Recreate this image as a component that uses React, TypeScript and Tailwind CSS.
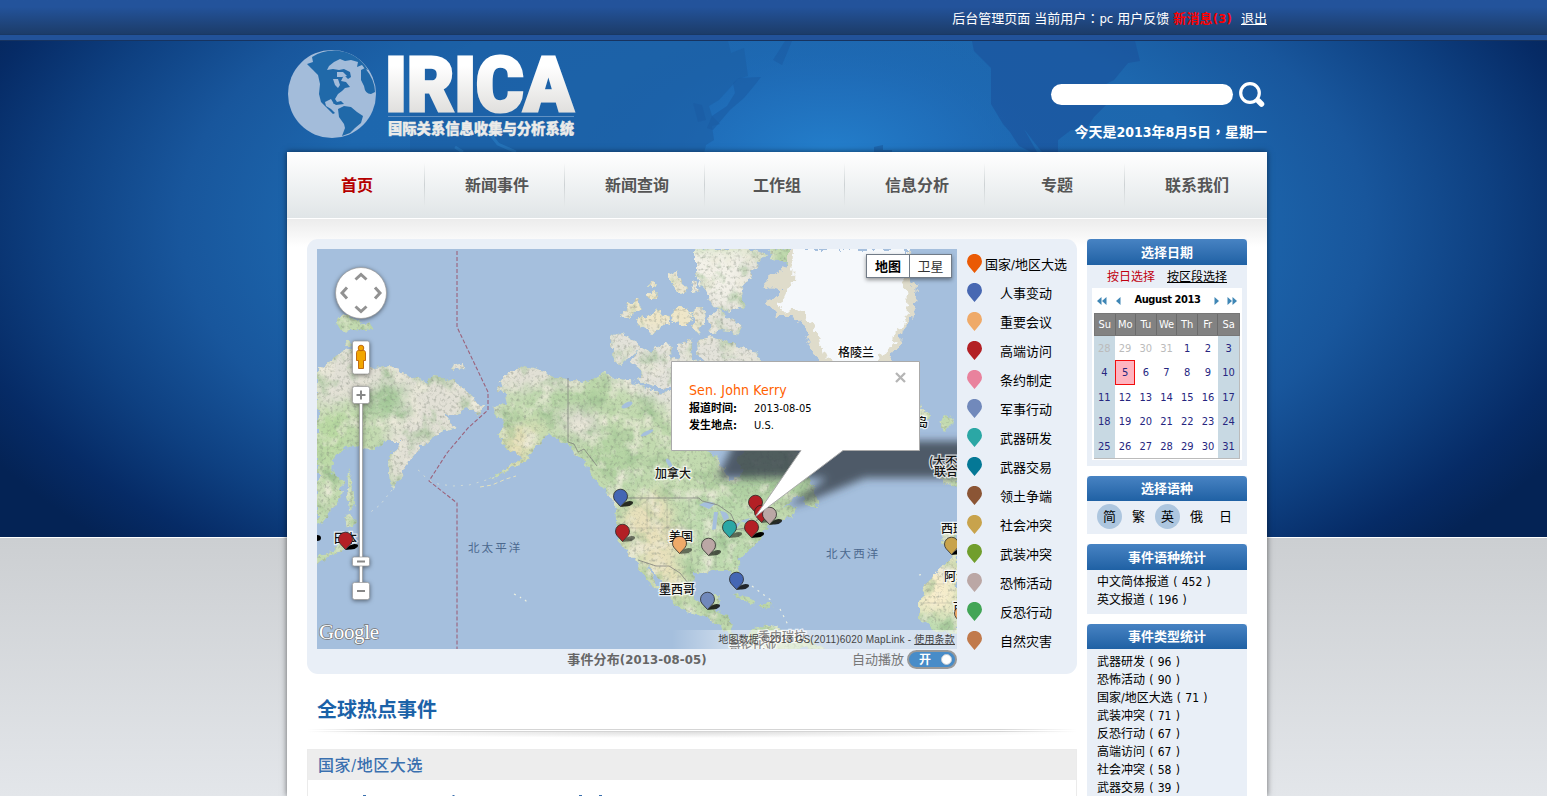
import type { ReactNode } from 'react';

const NAV = ['首页', '新闻事件', '新闻查询', '工作组', '信息分析', '专题', '联系我们'];

const LEGEND: [string, string][] = [
  ['国家/地区大选', '#ea5a05'],
  ['人事变动', '#4868b2'],
  ['重要会议', '#efaa69'],
  ['高端访问', '#b32025'],
  ['条约制定', '#e9829d'],
  ['军事行动', '#7189bb'],
  ['武器研发', '#2ba7a5'],
  ['武器交易', '#047896'],
  ['领土争端', '#8b5535'],
  ['社会冲突', '#c8a34c'],
  ['武装冲突', '#719e2d'],
  ['恐怖活动', '#bba7a5'],
  ['反恐行动', '#42a556'],
  ['自然灾害', '#c17a4c'],
];

const MARKERS: [number, number, string, number][] = [
  [28, 300, '#b32025', 1],
  [303, 257, '#4466b4', 0.8],
  [305, 292, '#b32025', 0.5],
  [362, 304, '#efaa69', 0.5],
  [391, 306, '#bba7a5', 0.6],
  [412, 288, '#2ba7a5', 0.5],
  [438, 263, '#b32025', 0.5],
  [444, 273, '#b32025', 0.5],
  [452, 275, '#bba7a5', 0.8],
  [434, 288, '#b32025', 1],
  [419, 340, '#4466b4', 0.8],
  [390, 360, '#7189bb', 0.8],
  [634, 305, '#c8a34c', 1],
  [644, 374, '#efaa69', 0.5],
];

const TYPES: [string, number][] = [
  ['武器研发', 96],
  ['恐怖活动', 90],
  ['国家/地区大选', 71],
  ['武装冲突', 71],
  ['反恐行动', 67],
  ['高端访问', 67],
  ['社会冲突', 58],
  ['武器交易', 39],
];

const LANGS: [string, boolean][] = [
  ['简', true],
  ['繁', false],
  ['英', true],
  ['俄', false],
  ['日', false],
];

const WEEKS = [
  [28, 29, 30, 31, 1, 2, 3],
  [4, 5, 6, 7, 8, 9, 10],
  [11, 12, 13, 14, 15, 16, 17],
  [18, 19, 20, 21, 22, 23, 24],
  [25, 26, 27, 28, 29, 30, 31],
];

const LAND =
  'M0 118L8 120 15 111 25 103 35 101 46 113 58 119 78 118 83 124 95 129 111 134 115 128 131 130 145 139 155 149 168 156 161 166 151 158 143 164 128 166 138 179 121 184 108 193 98 204 90 213 85 226 75 240 71 223 72 206 84 192 65 192 58 200 43 199 28 198 16 211 15 223 26 232 22 250 8 271 0 274Z' +
  'M31 221L36 231 38 258 33 261 30 240Z M26 269L34 264 41 271 35 278 28 277Z M32 281L34 294 28 301 14 305 0 317 0 309 18 300 26 292Z' +
  'M20 68L28 66 36 70 48 75 57 80 50 82 38 80 26 82 18 76Z M136 117L146 114 147 119 137 120Z M27 92L34 92 33 97 28 97Z' +
  'M179 139L188 126 206 117 221 121 236 128 251 129 265 133 276 130 288 124 298 130 310 131 324 137 336 142 356 143 354 128 350 112 368 106 386 116 400 112 430 120 440 150 412 160 386 180 388 200 402 208 408 224 416 232 425 226 421 210 440 190 470 190 490 222 498 240 480 248 464 260 478 256 476 266 460 274 449 279 446 288 436 298 423 311 421 321 425 333 421 335 414 321 398 321 388 324 376 324 375 341 382 354 394 354 397 346 404 346 399 364 412 366 415 370 413 381 420 389 428 390 435 381 451 376 475 383 488 388 508 400 420 400 418 394 405 378 388 368 368 363 355 353 348 338 330 314 340 338 338 340 321 318 316 308 306 298 300 288 298 254 288 241 275 228 265 211 251 198 248 194 231 186 218 199 208 212 188 224 172 230 188 220 204 208 188 199 181 186 188 176 181 168 175 159 190 154 188 146Z' +
  'M486 244L498 240 502 258 488 256Z M413 345L432 348 440 354 434 356 420 349Z M444 355L456 355 454 359 444 358Z' +
  'M303 67L310 57 321 50 324 60 312 68Z M318 71L326 66 330 70 340 58 344 68 350 66 352 75 344 78 336 85 326 80Z M331 36L337 31 341 36 334 39Z M330 46L337 40 340 50 333 50Z M296 88L304 84 314 89 324 100 314 106 309 112 303 117 294 108Z' +
  'M315 112L323 98 332 103 340 99 350 94 353 98 354 138 336 138 320 132 326 122Z' +
  'M351 24L358 22 364 32 370 38 366 44 356 38Z M373 34L379 31 382 42 376 44Z M355 62L364 58 375 66 372 76 362 76 354 70Z M377 58L386 58 388 72 382 84 376 76Z M392 66L402 60 412 70 424 76 420 84 406 82 394 84Z' +
  'M378 0L434 0 450 6 436 22 424 44 428 58 414 62 398 58 388 44 378 24Z M380 92L392 88 410 92 430 100 446 112 440 130 418 124 396 118 382 108Z M362 96L374 90 376 112 362 112Z' +
  'M452 0L474 0 482 6 474 16 456 10Z M590 168L602 154 612 166 604 178Z M622 172L632 166 636 174 628 182Z' +
  'M622 222L640 210 640 236 628 234Z M626 276L640 272 640 300 630 300 624 290Z M640 306L625 318 608 334 603 354 603 368 618 382 640 386Z';

const ICE =
  'M470 0L598 0 591 14 591 29 600 38 598 56 594 69 585 80 583 95 571 112 556 138 530 146 512 130 505 112 495 103 486 74 475 66 461 66 450 53 465 41 445 36 470 16Z';

function Pin({ color }: { color: string }) {
  return (
    <svg className="h-[19px] w-[15px] shrink-0" viewBox="0 0 15 19">
      <path d="M7.5 19L2.2 12.7A7.5 7.5 0 1 1 12.8 12.7Z" fill={color} />
    </svg>
  );
}

function MapLabel({ x, y, size = 12, children }: { x: number; y: number; size?: number; children: ReactNode }) {
  return (
    <text x={x} y={y + 1} fontSize={size} fill="#111" stroke="#fff" strokeOpacity=".75" strokeWidth="2.5" paintOrder="stroke" fontWeight="500">
      {children}
    </text>
  );
}

function WorldMap() {
  return (
    <svg className="absolute inset-0 h-[400px] w-[640px]" viewBox="0 0 640 400">
      <defs>
        <filter id="terrain" x="-10" y="-10" width="670" height="430" filterUnits="userSpaceOnUse" colorInterpolationFilters="sRGB">
          <feTurbulence type="fractalNoise" baseFrequency=".12" numOctaves="4" seed="8" result="n" />
          <feDisplacementMap in="SourceGraphic" in2="n" scale="10" xChannelSelector="R" yChannelSelector="G" result="d" />
          <feTurbulence type="fractalNoise" baseFrequency=".055" numOctaves="5" seed="3" />
          <feColorMatrix values="0 0 0 0 .93  0 0 0 0 .92  0 0 0 0 .86  2.6 0 0 0 -1.3" />
          <feComposite in2="d" operator="in" result="light" />
          <feTurbulence type="fractalNoise" baseFrequency=".05" numOctaves="5" seed="12" />
          <feColorMatrix values="0 0 0 0 .58  0 0 0 0 .73  0 0 0 0 .54  0 2 0 0 -1.02" />
          <feComposite in2="d" operator="in" result="dark" />
          <feTurbulence type="fractalNoise" baseFrequency=".3" numOctaves="3" seed="21" />
          <feColorMatrix values="0 0 0 0 .5  0 0 0 0 .53  0 0 0 0 .48  0 0 1.3 0 -.66" />
          <feComposite in2="d" operator="in" result="grain" />
          <feMerge>
            <feMergeNode in="d" />
            <feMergeNode in="dark" />
            <feMergeNode in="light" />
            <feMergeNode in="grain" />
          </feMerge>
        </filter>
        <filter id="ice" x="430" y="-10" width="190" height="180" filterUnits="userSpaceOnUse" colorInterpolationFilters="sRGB">
          <feTurbulence type="fractalNoise" baseFrequency=".12" numOctaves="4" seed="5" />
          <feDisplacementMap in="SourceGraphic" scale="13" xChannelSelector="R" yChannelSelector="G" />
        </filter>
        <filter id="soft"><feGaussianBlur stdDeviation="7" /></filter>
        <filter id="shade" x="-20%" y="-40%" width="140%" height="180%"><feGaussianBlur stdDeviation="4" /></filter>
        <clipPath id="land"><path d={LAND} /></clipPath>
        <linearGradient id="fade">
          <stop offset="0" stopColor="#fff" stopOpacity="0" />
          <stop offset=".2" stopColor="#fff" stopOpacity=".5" />
          <stop offset="1" stopColor="#fff" stopOpacity=".55" />
        </linearGradient>
      </defs>
      <rect width="640" height="400" fill="#a5bfdd" />
      <g filter="url(#terrain)">
        <g clipPath="url(#land)">
          <rect width="640" height="400" fill="#c2daaf" />
          <g filter="url(#soft)">
            <path d="M0 95H180V165L130 190 90 240H70V170L45 150 0 160Z" fill="#e2e0d6" />
            <path d="M170 110H270L262 140 226 150 180 140Z" fill="#e2e0d6" />
            <path d="M285 0H450V135L400 190 350 160 290 130Z" fill="#e3e2da" />
            <path d="M360 0H430L420 60 380 40Z" fill="#f3f1e8" />
            <path d="M300 50L360 20 390 90 320 80Z" fill="#eee6c8" />
            <path d="M0 160L40 165 20 210 0 230Z" fill="#b9d9a2" />
            <path d="M60 135L92 140 82 170 52 168Z" fill="#a5ca9a" />
            <path d="M200 140L290 135 280 165 330 230 300 235 260 190Z" fill="#b3d3a2" />
            <path d="M235 165L270 158 285 180 262 192Z" fill="#dedbd2" />
            <path d="M188 180L225 175 205 218 180 222Z" fill="#e6dfb7" />
            <path d="M305 260L345 240 365 300 350 325 310 302Z" fill="#e8e0bb" />
            <path d="M330 315L365 320 370 345 345 350Z" fill="#eae2ba" />
            <path d="M370 250L440 240 440 320 380 320Z" fill="#bddaae" />
            <path d="M395 170L490 190 495 250 415 250Z" fill="#aecfa0" />
            <path d="M595 305H640V365H600Z" fill="#f7edcb" />
            <path d="M600 365H640V390H600Z" fill="#bddbb0" />
          </g>
        </g>
      </g>
      <g filter="url(#ice)">
        <path d={ICE} fill="#dfdccb" />
        <path d="M476 0L594 0 587 30 590 64 572 98 546 130 515 120 498 80 486 62 463 60 475 34Z" fill="#f5f8fb" />
      </g>
      <g fill="#a5bfdd">
        <ellipse cx="310" cy="156" rx="6" ry="2.500" transform="rotate(-25 310 156)" />
        <ellipse cx="330" cy="184" rx="7" ry="1.800" transform="rotate(-25 330 184)" />
        <ellipse cx="352" cy="214" rx="2" ry="5" transform="rotate(-30 352 214)" />
        <path d="M382 256q9-6 16-1l-6 5q-6-3-10-4zM397 263l4 0-2 17-4 1zM403 262q8 0 9 7l-5 3zM411 278l13-5-4 6zM423 272l10-3-4 5z" />
      </g>
      <g fill="none" stroke="#777" strokeOpacity=".7" strokeWidth="1">
        <path d="M298 249H382l3 3 16 4 13 9 5 11-2 5 17-3 6-7 9-3" />
        <path d="M251 129V193l6 2 4 8 6-3 13 17M321 311l18 6h13l11 7 8 10" />
        <path d="M299 279h75M330 250v30M350 250v42M372 250v20M374 270v40M399 280v38M609 335h18v-16M603 354h37" strokeOpacity=".25" />
      </g>
      <path d="M140 2V78L171 143V161L151 179 130 204 112 232 140 254V400" fill="none" stroke="#98435a" strokeOpacity=".75" strokeWidth="1.1" strokeDasharray="4 2" />
      <path d="M101 221l3 2 4 5 7 5 6 2 15 2 16-1 14-4 13-4" fill="none" stroke="#e1e4d1" strokeOpacity=".7" strokeDasharray="2 6" />
      <path d="M163 238l12-2 14-6 10-3" fill="none" stroke="#e3e1bf" strokeDasharray="4 3" />
      <path d="M75 241l-12 15-12 9" fill="none" stroke="#dfe5da" strokeOpacity=".7" strokeDasharray="2 5" />
      <path d="M197 345l2 1M203 348l1 1M208 351l3 3M435 337l20 15M463 360l8 16M602 326l5-1" fill="none" stroke="#edf0e0" strokeWidth="1.2" strokeDasharray="2 5" />
      <g filter="url(#shade)" fill="#3a444f" fillOpacity=".82">
        <path d="M418 192H650V229H548L492 252 470 258 510 229H400Z" />
      </g>
      <g fontFamily="'Noto Sans CJK SC', sans-serif">
        <MapLabel x={521} y={107}>格陵兰</MapLabel>
        <MapLabel x={338} y={228}>加拿大</MapLabel>
        <MapLabel x={352} y={291}>美国</MapLabel>
        <MapLabel x={342} y={344}>墨西哥</MapLabel>
        <MapLabel x={16} y={293}>日本</MapLabel>
        <MapLabel x={599} y={177}>岛</MapLabel>
        <MapLabel x={612} y={216}>(大不</MapLabel>
        <MapLabel x={617} y={226}>联合</MapLabel>
        <MapLabel x={624} y={283}>西班</MapLabel>
        <MapLabel x={627} y={331}>阿尔</MapLabel>
        <MapLabel x={636} y={362}>可</MapLabel>
        <MapLabel x={441} y={391}>委内瑞拉</MapLabel>
        <MapLabel x={412} y={401}>哥伦比亚</MapLabel>
        <g fontSize="11.5" fill="#4b688e" letterSpacing="2.100">
          <text x="151" y="303">北太平洋</text>
          <text x="509" y="309">北大西洋</text>
        </g>
      </g>
      {MARKERS.map(([x, y, color, shadow], i) => (
        <g key={i} transform={`translate(${x + 0.5} ${y + 1})`}>
          <path d="M0 0Q4-6 9-6 14-6 12-3 9 0 4-.5Z" fill="#000" fillOpacity={shadow} />
          <path d="M0-.5L-5.3-6.2A7 7 0 1 1 5.3-6.2Z" fill={color} stroke="#222" strokeOpacity=".75" strokeWidth="1" />
        </g>
      ))}
      <ellipse cx="0" cy="289" rx="4" ry="3" />
      <path d="M354.5 112.5H602.5V201.5H526L438 268 484 201.5H354.5Z" fill="#fff" stroke="#aaa" />
      <rect x="355" width="323" y="381" height="19" fill="url(#fade)" />
      <text x="2" y="390" fontFamily="'Liberation Serif', serif" fontSize="21" textLength="60" fill="#fff" stroke="#777" strokeWidth="1.4" paintOrder="stroke">
        Google
      </text>
    </svg>
  );
}

function MapControls() {
  return (
    <svg className="absolute left-[12px] top-[12px] h-[350px] w-[64px] drop-shadow-[0_1px_2px_rgba(0,0,0,0.5)]" viewBox="12 12 64 350">
      <circle cx="44" cy="44" r="25.5" fill="#fff" stroke="#999" strokeWidth=".7" />
      <g fill="none" stroke="#929292" strokeWidth="3">
        <path d="M38.500 30.500l5.500-5 5.500 5M38.500 57.500l5.500 5 5.500-5M30 38.500l-5 5.500 5 5.500M58 38.500l5 5.500-5 5.500" />
      </g>
      <g fill="#fff" stroke="#999" strokeWidth=".7">
        <rect x="42.500" y="150" width="3" height="185" />
        <rect x="35.500" y="92" width="17" height="33" rx="2" />
        <rect x="35.500" y="137.500" width="17" height="17" rx="2" />
        <rect x="35.500" y="308" width="17" height="9" rx="1.500" />
        <rect x="35.500" y="333.500" width="17" height="17" rx="2" />
      </g>
      <g fill="#f2a600" stroke="#b95f08" strokeWidth=".9">
        <path d="M39.500 103.500q0-2.500 4.500-2.500t4.500 2.500v8h-2v8h-5v-8h-2z" />
        <circle cx="44" cy="99" r="2.800" />
      </g>
      <path d="M39.500 146h9M44 141.500v9M40 312.500h8M40 342h8" stroke="#888" strokeWidth="2" />
    </svg>
  );
}

function Logo() {
  return (
    <svg className="h-[92px] w-[290px]" viewBox="0 0 290 92">
      <defs>
        <linearGradient id="silver" gradientUnits="userSpaceOnUse" x1="0" x2="0" y1="6" y2="65">
          <stop offset=".2" stopColor="#fff" />
          <stop offset="1" stopColor="#e0dfdd" />
        </linearGradient>
      </defs>
      <circle cx="45" cy="46" r="44" fill="#a3bcda" />
      <g fill="#2069a9">
        <path d="M25 9Q35 2 49 2.500 70 4 81 22L78 21 75 17 70 19 71 14 64 12 58 13 53 11 47 14 42 18 40 22 46 21 52 22 57 21 63 24 64 29 61 31 57 27 54 33 59 34 63 39 58 40 55 43 51 46 48 51 50 54 47 56 44 51 38 54 39 58 44 61 48 65 46 66 39 59 34 54 32 46 33 36 31 27 26 22 20 16 26 14Z" />
        <path d="M74 22L78 20Q88 32 88 44L84 46Q78 46 77 38L74 32Z" />
        <path d="M51 61L57 58 64 59 70 64 76 68 74 75 68 80 63 85 55 88 58 80 57 76 52 69Z" />
        <path d="M46 55l8-2 3 3-8 1z" />
      </g>
      <path d="M50 24l6 0 4 4-5 1-5 0zM46 31l5 0 2 6-2 3-3-3z" fill="#a3bcda" />
      <text x="98" y="62.500" fontFamily="Roboto, sans-serif" fontWeight="900" fontSize="76" textLength="188" lengthAdjust="spacingAndGlyphs" fill="url(#silver)" stroke="url(#silver)" strokeWidth="3.200">
        IRICA
      </text>
      <path d="M101 68.500H287" stroke="#7fa5cf" strokeOpacity=".7" />
      <text x="101" y="86" fontFamily="'Noto Sans CJK SC', sans-serif" fontWeight="900" fontSize="14.300" textLength="186" fill="#ebebe9" stroke="#ebebe9" strokeWidth=".4">
        国际关系信息收集与分析系统
      </text>
    </svg>
  );
}

function SideTitle({ short, children }: { short?: boolean; children: ReactNode }) {
  return (
    <h3
      className={`rounded-t-[4px] bg-linear-to-b from-[#4783c3] to-[#1f61a4] text-center text-[13px] font-bold text-white ${short ? 'h-[25px] leading-[25px]' : 'h-[26px] leading-[27px]'}`}
    >
      {children}
    </h3>
  );
}

function Arrow({ d, w }: { d: string; w: number }) {
  return (
    <svg width={w} height="8" viewBox={`0 0 ${w} 8`}>
      <path d={d} fill="#3f86b5" />
    </svg>
  );
}

function Calendar() {
  return (
    <div className="mx-[5px] h-[172px] bg-white px-[2px]">
      <div className="flex h-[25px] items-center px-[3px] text-[11px] font-bold text-black">
        <Arrow w={10} d="M4.500 0v8L0 4zM9.500 0v8L5 4z" />
        <span className="w-[9px]" />
        <Arrow w={5} d="M4.500 0v8L0 4z" />
        <span className="flex-1 text-center tracking-[-0.4px]">August 2013</span>
        <Arrow w={5} d="M.5 0v8L5 4z" />
        <span className="w-[8px]" />
        <Arrow w={10} d="M.5 0v8L5 4zM5.500 0v8L10 4z" />
      </div>
      <div className="h-[146px] border border-t-0 border-[#bbb]">
        <div className="-mx-px grid h-[23px] grid-cols-7 border border-[#777] bg-[#828282] text-center text-[11px] leading-[21px] text-white">
          {['Su', 'Mo', 'Tu', 'We', 'Th', 'Fr', 'Sa'].map((d, i) => (
            <span key={d} className={i < 6 ? 'border-r border-[#6c6c6c]' : ''}>{d}</span>
          ))}
        </div>
        <div className="-ml-px grid h-[122px] grid-cols-7 grid-rows-5 text-center text-[11px] leading-[26px] text-[#26267f]">
          {WEEKS.flatMap((week, r) =>
            week.map((day, c) => {
              const weekend = c === 0 || c === 6;
              const outside = r === 0 && day > 20;
              const chosen = r === 1 && c === 1;
              return (
                <span
                  key={`${r}-${c}`}
                  className={
                    chosen
                      ? 'border border-[#f20d0d] bg-[#ffb4c0] leading-[24px]'
                      : outside
                        ? weekend ? 'bg-[#c8d9e3] text-[#bbb]' : 'text-[#bbb]'
                        : weekend ? 'bg-[#c8d9e3]' : ''
                  }
                >
                  {day}
                </span>
              );
            }),
          )}
        </div>
      </div>
    </div>
  );
}

function HeaderBackdrop() {
  return (
    <svg className="absolute left-0 top-0 h-[538px] w-[1547px]" viewBox="0 0 1547 538">
      <defs>
        <radialGradient id="sea" cx="830" cy="158" r="190" gradientUnits="userSpaceOnUse" gradientTransform="translate(830 158) scale(1.3 .75) translate(-830 -158)">
          <stop offset="0" stopColor="#2480cd" />
          <stop offset=".5" stopColor="#2070bd" stopOpacity=".8" />
          <stop offset="1" stopColor="#1c63b0" stopOpacity="0" />
        </radialGradient>
      </defs>
      <rect x="560" y="41" width="520" height="112" fill="url(#sea)" />
      <path d="M728 41l3 12 13-5 4 28-10 3-19 21-10 6 3 10 8 8-8 2 2 14-8 5-2 8H410V41z" fill="#1b5ca3" fillOpacity=".55" />
      <path d="M733 83l6-5 22-1-7 9-10 12-14 12-17 20-6-2 5-12 15-10 8-13zM693 103l9 2 4 15-8 2zM773 60l12-19h7l-10 24z" fill="#1b5ca3" fillOpacity=".6" />
      <path d="M972 41l2 10 17 17v36l12 20 7 8 9 14 12 6h6l-13-23 10 13 8 10h16v-12l13-10 14 1 9-14 18-18 4-10-14-3 12-6 14-17 12-2-6-24z" fill="#1a529b" fillOpacity=".6" />
      <path d="M455 147l8 5M490 134l8 10 18 8" stroke="#2f87cd" strokeOpacity=".45" strokeWidth="3" fill="none" />
      <path d="M874 147l9-2v5l9 0v2h-18z" fill="#1b5ca3" fillOpacity=".7" />
    </svg>
  );
}

export default function App() {
  return (
    <div className="relative isolate h-[796px] w-full overflow-hidden bg-[#dfe2e5] font-['DejaVu_Sans_Condensed','Noto_Sans_CJK_SC',sans-serif] text-[13px] text-black">
      <div className="absolute inset-x-0 top-0 -z-10 h-[796px] bg-linear-to-b from-[#cccfd2] from-[540px] to-[#e3e6ea]">
        <div className="relative h-[538px] border-b border-white bg-[radial-gradient(ellipse_900px_470px_at_50%_225px,#1f6bb3_0%,#1d67ae_50%,#18569c_66%,#0e4081_80%,#062b66_92%,#042355_100%)]">
          <HeaderBackdrop />
        </div>
      </div>

      <div className="h-[41px] border-b border-[#17335f] bg-[#225299]">
        <div className="h-[35px] border-b border-[#193864] bg-linear-to-b from-[#23539b] from-20% to-[#1c3c69]">
          <div className="ml-[287px] flex h-[36px] w-[980px] items-center justify-end gap-[4px] pt-px whitespace-nowrap text-white">
            <span>后台管理页面</span>
            <span>当前用户<span className="font-['Noto_Sans_CJK_TC']">：</span>pc</span>
            <span>用户反馈</span>
            <span className="font-bold tracking-[0.15px] text-[#f00]">新消息(3)</span>
            <span className="ml-[5px] underline">退出</span>
          </div>
        </div>
      </div>

      <header className="ml-[287px] flex h-[111px] w-[980px] justify-between pt-[7px]">
        <Logo />
        <div className="flex flex-col items-end pt-[34px]">
          <div className="flex h-[26px] items-start gap-[6px] pr-[2px]">
            <div className="mt-[2px] h-[21px] w-[182px] rounded-full bg-white" />
            <svg className="h-[26px] w-[26px]" viewBox="0 0 26 26" fill="none" stroke="#fff" strokeLinecap="round">
              <circle cx="11" cy="11" r="9.300" strokeWidth="3.200" />
              <path d="M19.500 19l3 3" strokeWidth="5.500" />
            </svg>
          </div>
          <p className="mt-[13px] text-[14px] leading-[20px] font-bold whitespace-nowrap text-white">
            今天是2013年8月5日<span className="font-['Noto_Sans_CJK_TC']">，</span>星期一
          </p>
        </div>
      </header>

      <div className="ml-[287px] h-[644px] w-[980px] bg-white shadow-[0_0_6px_rgba(0,0,0,0.55)]">
        <nav className="flex h-[67px] border-b border-white bg-linear-to-b from-white to-[#e0e5e7]">
          {NAV.map((item, i) => (
            <div key={item} className="flex h-[66px] w-[140px] items-center">
              <span className={`flex-1 pt-[2px] pl-[3px] text-center text-[16px] font-bold ${i === 0 ? 'text-[#b50000]' : 'text-[#555]'}`}>{item}</span>
              <span className={`mr-[2px] h-[44px] w-px bg-linear-to-b from-transparent via-[#cdd2d4] to-transparent ${i === 6 ? 'opacity-0' : ''}`} />
            </div>
          ))}
        </nav>

        <div className="flex h-[577px] gap-[10px] overflow-hidden bg-linear-to-b from-[#ececec] to-white to-[28px] px-[20px] pt-[20px]">
          <main className="w-[770px] shrink-0">
            <section className="flex h-[435px] rounded-[11px] bg-[#e9eff7] px-[10px]">
              <div className="w-[640px] shrink-0 pt-[10px]">
                <div className="relative h-[400px] overflow-hidden">
                  <WorldMap />
                  <MapControls />
                  <div className="absolute right-[5px] top-[5px] flex h-[24px] border border-[#717b87] bg-white text-center leading-[24px] shadow-[0_2px_4px_rgba(0,0,0,0.4)]">
                    <span className="w-[43px] border-r border-[#717b87] font-bold">地图</span>
                    <span className="w-[41px] text-[#333]">卫星</span>
                  </div>
                  <div className="absolute left-[354px] top-[112px] h-[90px] w-[249px] pl-[18px] pt-[20px] text-[11px] leading-[17px]">
                    <p className="text-[14px] leading-[19px] tracking-[0.12px] text-[#ff6100]">Sen. John Kerry</p>
                    <p className="flex"><b className="w-[65px]">报道时间:</b>2013-08-05</p>
                    <p className="flex"><b className="w-[65px]">发生地点:</b>U.S.</p>
                    <svg className="absolute right-[14px] top-[11px] h-[11px] w-[11px]" viewBox="0 0 11 11">
                      <path d="M1 1l9 9M10 1l-9 9" stroke="#b5b5b5" strokeWidth="2.300" />
                    </svg>
                  </div>
                  <p className="absolute right-[2px] bottom-0 flex h-[19px] items-center whitespace-pre font-['Liberation_Sans','Noto_Sans_CJK_SC',sans-serif] text-[10px] tracking-[0.19px] text-[#444]">
                    地图数据 ©2013 GS(2011)6020 MapLink - <span className="underline">使用条款</span>
                  </p>
                </div>
                <div className="grid h-[21px] grid-cols-[1fr_140px_1fr] items-center whitespace-nowrap text-[#666]">
                  <span />
                  <span className="text-center font-bold tracking-[0.12px]">事件分布(2013-08-05)</span>
                  <div className="flex items-center justify-end gap-[3px]">
                    <span className="text-[#777]">自动播放</span>
                    <span className="flex h-[19px] w-[50px] items-center justify-between rounded-full border-2 border-[#999] bg-[#488cc8] pr-[3px] pl-[10px] text-[12px] leading-none font-bold text-white">
                      开<i className="h-[11px] w-[11px] rounded-full border border-[#c3cbd3] bg-white" />
                    </span>
                  </div>
                </div>
              </div>
              <ul className="ml-[10px] w-[101px] shrink-0 pt-[11px]">
                {LEGEND.map(([name, color]) => (
                  <li key={name} className="flex h-[29px] items-center">
                    <div className="-mt-[2px]"><Pin color={color} /></div>
                    <span className="ml-[2px] w-[84px] text-center whitespace-nowrap">{name}</span>
                  </li>
                ))}
              </ul>
            </section>

            <h2 className="mt-[21px] pl-[10px] text-[20px] leading-[30px] font-bold text-[#1b62a8]">全球热点事件</h2>
            <div className="mt-[4px] h-[3px] border-y border-[#d5d5d5] bg-white mask-x-from-90%" />
            <div className="h-[17px] bg-[radial-gradient(ellipse_50%_6px_at_50%_0,#dedede,transparent)]" />
            <section className="h-[60px] border border-[#ebebeb]">
              <h3 className="h-[30px] bg-[#ededed] pl-[10px] text-[16px] leading-[31px] font-medium tracking-[0.6px] text-[#3a70af]">国家/地区大选</h3>
              <svg className="h-[17px] w-[400px]" viewBox="0 0 400 17">
                <path d="M55 15.500h3M144.500 15.500h2M271 15.500h3M291 15.500h3" stroke="#3a70af" />
              </svg>
            </section>
          </main>

          <aside className="flex w-[160px] shrink-0 flex-col gap-[10px]">
            <section className="h-[227px] shrink-0 bg-[#e9eff7]">
              <SideTitle>选择日期</SideTitle>
              <div className="flex h-[23px] items-center justify-center gap-[12px] pt-px text-[12px]">
                <span className="text-[#c00010]">按日选择</span>
                <span className="underline">按区段选择</span>
              </div>
              <Calendar />
            </section>
            <section className="h-[58px] shrink-0 bg-[#e9eff7]">
              <SideTitle short>选择语种</SideTitle>
              <div className="flex h-[31px] items-center gap-[4px] pl-[10px]">
                {LANGS.map(([name, on]) => (
                  <span key={name} className={`h-[25px] w-[25px] rounded-full text-center leading-[26px] ${on ? 'bg-[#adc6df]' : ''}`}>{name}</span>
                ))}
              </div>
            </section>
            <section className="h-[70px] shrink-0 bg-[#e9eff7]">
              <SideTitle>事件语种统计</SideTitle>
              <div className="pt-[3px] pl-[10px] text-[12px] leading-[18px] [word-spacing:0.8px]">
                <p>中文简体报道 ( 452 )</p>
                <p>英文报道 ( 196 )</p>
              </div>
            </section>
            <section className="h-[200px] shrink-0 bg-[#e9eff7]">
              <SideTitle short>事件类型统计</SideTitle>
              <div className="pt-[4px] pl-[10px] text-[12px] leading-[18px] [word-spacing:0.8px]">
                {TYPES.map(([name, count]) => (
                  <p key={name}>{name} ( {count} )</p>
                ))}
              </div>
            </section>
          </aside>
        </div>
      </div>
    </div>
  );
}
